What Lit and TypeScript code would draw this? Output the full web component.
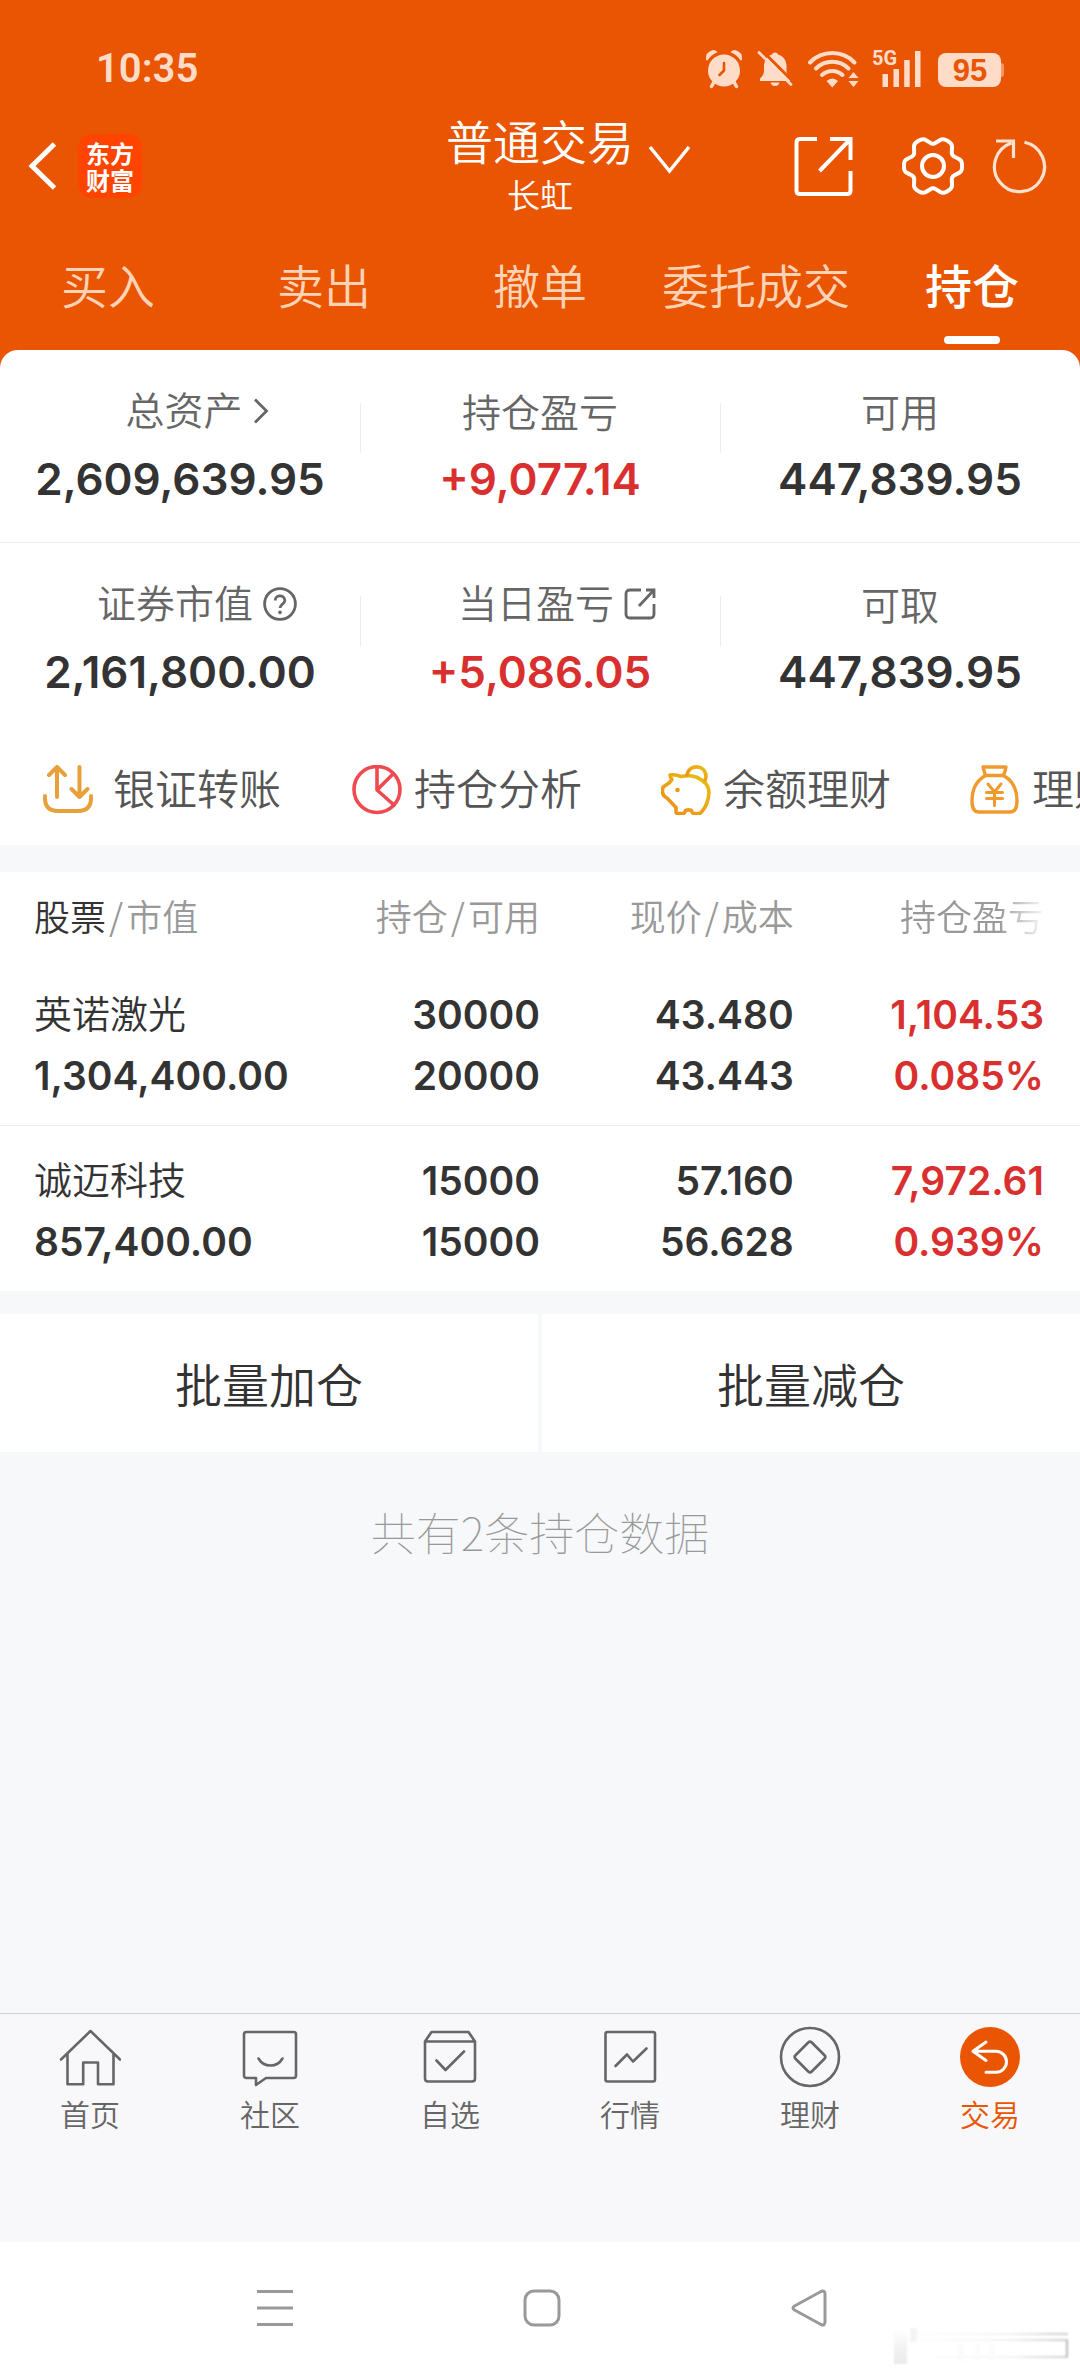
import { LitElement, html, css, svg, nothing } from "lit";
import { customElement, state } from "lit/decorators.js";
import { classMap } from "lit/directives/class-map.js";

interface Stat {
  label: string;
  value: string;
  rise?: boolean;
  icon?: unknown;
}

interface Holding {
  name: string;
  marketValue: string;
  held: string;
  available: string;
  price: string;
  cost: string;
  profit: string;
  rate: string;
}

/** Outline of a six-lobed gear, built from smoothed polar points. */
function gearPath(cx: number, cy: number): string {
  const profile: [number, number][] = [
    [-10, 29.5],
    [10, 29.5],
    [18, 25.5],
    [30, 21.5],
    [42, 25.5],
  ];
  const points: [number, number][] = [];
  for (let lobe = 0; lobe < 6; lobe++) {
    for (const [angle, r] of profile) {
      const a = ((lobe * 60 + angle) * Math.PI) / 180;
      points.push([cx + r * Math.cos(a), cy + r * Math.sin(a)]);
    }
  }
  const mid = (i: number) => {
    const p = points[i % points.length];
    const q = points[(i + 1) % points.length];
    return `${((p[0] + q[0]) / 2).toFixed(1)} ${((p[1] + q[1]) / 2).toFixed(1)}`;
  };
  let d = `M${mid(points.length - 1)}`;
  points.forEach((p, i) => {
    d += `Q${p[0].toFixed(1)} ${p[1].toFixed(1)} ${mid(i)}`;
  });
  return d + "Z";
}

const chevronRight = html`<svg class="mini" width="16" height="28" viewBox="0 0 16 28" aria-hidden="true">
  <path d="M2 2.500 13.500 14 2 25.500" />
</svg>`;

const question = html`<svg class="mini" width="34" height="34" viewBox="0 0 34 34" aria-hidden="true">
  <circle cx="17" cy="17" r="15.4" />
  <path d="M12.2 13.4c0-6 9.6-6 9.6 0 0 3.800-4.800 3.600-4.800 7.600" />
  <circle class="dot" cx="17" cy="25.4" r="1.8" />
</svg>`;

const openSmall = html`<svg class="mini" width="32" height="32" viewBox="0 0 32 32" aria-hidden="true">
  <path d="M17 2H6Q2 2 2 6v20q0 4 4 4h20q4 0 4-4V16M22 2h8v8M15 18 30 2" />
</svg>`;

const STATS: Stat[][] = [
  [
    { label: "总资产", value: "2,609,639.95", icon: chevronRight },
    { label: "持仓盈亏", value: "+9,077.14", rise: true },
    { label: "可用", value: "447,839.95" },
  ],
  [
    { label: "证券市值", value: "2,161,800.00", icon: question },
    { label: "当日盈亏", value: "+5,086.05", rise: true, icon: openSmall },
    { label: "可取", value: "447,839.95" },
  ],
];

const HOLDINGS: Holding[] = [
  {
    name: "英诺激光",
    marketValue: "1,304,400.00",
    held: "30000",
    available: "20000",
    price: "43.480",
    cost: "43.443",
    profit: "1,104.53",
    rate: "0.085%",
  },
  {
    name: "诚迈科技",
    marketValue: "857,400.00",
    held: "15000",
    available: "15000",
    price: "57.160",
    cost: "56.628",
    profit: "7,972.61",
    rate: "0.939%",
  },
];

const SHORTCUTS = [
  {
    label: "银证转账",
    wide: true,
    icon: svg`<g stroke="#e8a03a" stroke-width="4">
      <path d="M14 32V2M6 10l8-8 8 8M36.500 2v30M28.500 24l8 8 8-8" />
      <path d="M2 31v2q0 13 13 13h20q13 0 13-13v-2" /></g>`,
  },
  {
    label: "持仓分析",
    icon: svg`<g stroke="#ee4a50" stroke-width="3.6">
      <circle cx="25" cy="24.500" r="23" /><path d="M25 2v23L41 9M25 25l17 15" /></g>`,
  },
  {
    label: "余额理财",
    icon: svg`<defs><linearGradient id="pig" x1="0" y1="1" x2="1" y2="0">
        <stop offset="0" stop-color="#ee8a1c" /><stop offset="1" stop-color="#e8c010" /></linearGradient></defs>
      <g stroke="url(#pig)" stroke-width="3.6">
      <path d="M9 10q5-1 11 1.500 8-1.800 15 .5 13 5 13 16-1 12-7.500 19-1 1.500-3 1.500h-4.500q-2 0-2.500-3-3-1.200-6 0-.5 3-2.500 3H17q-2 0-2-2v-4L6 33q-4-2-4.300-5-.7-4 .5-6l5.800-4 3-3.500Q9 12 9 10Z" />
      <path d="M26 10C28-1.500 44-.5 45 11q0 2-.8 4" /></g>
      <circle cx="16.500" cy="25" r="2.300" fill="#ea9a1a" />`,
  },
  {
    label: "理财产品",
    icon: svg`<g stroke="#f09a2e" stroke-width="3.400">
      <path d="M13 2h23q-1 5-2.500 8.500h-18Q14 6 13 2Z" />
      <path d="M15.500 10.500Q2 18 2 36q0 11 7 11h31q7 0 7-11 0-18-13.500-25.500" />
      <path stroke-width="3" d="m18 19 6.500 8 6.500-8M16.500 27.500h16M16.500 33.500h16M24.500 27v13.500" /></g>`,
  },
];

const BOTTOM_TABS = [
  {
    label: "首页",
    icon: svg`<path d="M1 33.500 30.500 5 60 33.500M7.500 28v30.300h15.700V36.500H38v21.800h15.500V28" />`,
  },
  {
    label: "社区",
    icon: svg`<path d="M6.500 6h47q2.500 0 2.500 2.500v41q0 2.500-2.500 2.500H26l-10 7v-7H6.500Q4 52 4 49.500v-41Q4 6 6.500 6Z" />
      <path d="M18.500 32.500q4 7 12 7t12-7" />`,
  },
  {
    label: "自选",
    icon: svg`<path d="M5 15.500 11.500 6h37L55 15.500v37q0 3-3 3H8q-3 0-3-3ZM5 15.500h50M16.500 34.500l9 9.500L44 25.500" />`,
  },
  {
    label: "行情",
    icon: svg`<rect x="5.500" y="6" width="49.500" height="49.500" rx="2" />
      <path d="m15.500 40 11.500-11.500 6 7L46.500 22.500" />`,
  },
  {
    label: "理财",
    icon: svg`<circle cx="30" cy="31" r="29" /><rect x="18.500" y="19.500" width="23" height="23" rx="2.500" transform="rotate(45 30 31)" />`,
  },
  {
    label: "交易",
    icon: svg`<circle class="disc" cx="30" cy="31" r="30" />
      <path class="mark" d="M26 16 13 25.300 26 34.500M13.500 25.300H36a10.500 10.500 0 0 1 0 21H26" />`,
  },
];

@customElement("status-bar")
class StatusBar extends LitElement {
  static styles = css`
    :host {
      display: flex;
      justify-content: space-between;
      align-items: center;
      height: 82px;
      padding: 28px 76px 0 96px;
      color: #ffdcc8;
      font-family: Roboto, "Noto Sans", sans-serif;
    }
    .time {
      font-size: 40px;
      font-weight: 600;
      line-height: 48px;
    }
    .icons {
      display: flex;
      align-items: center;
      gap: 14px;
    }
    svg {
      display: block;
      overflow: visible;
      fill: currentColor;
    }
    .hole {
      stroke: #e95503;
      fill: none;
    }
    .line {
      stroke: currentColor;
      fill: none;
      stroke-linecap: round;
    }
    .network {
      font: 700 20px Roboto, sans-serif;
    }
    .battery {
      font: 700 31px "Liberation Sans", sans-serif;
      fill: #e95503;
      text-anchor: middle;
    }
  `;

  render() {
    return html`
      <span class="time">10:35</span>
      <div class="icons">
        <svg width="38" height="38" viewBox="0 0 38 38" role="img" aria-label="闹钟">
          <circle cx="19" cy="20.5" r="16" />
          <path d="M1 10Q0 2 8 0q3 0 4.500 2.200Q5.500 5 2.500 10.500ZM37 10q1-8-7-10-3 0-4.500 2.200Q32.500 5 35.500 10.500Z" />
          <path class="line" stroke-width="3.5" d="m9 32-2.500 4.500M29 32l2.500 4.500" />
          <path class="hole" stroke-width="2.6" stroke-linecap="round" stroke-linejoin="round" d="M19 13v7.500L14.500 25" />
        </svg>
        <svg width="36" height="38" viewBox="0 0 36 38" role="img" aria-label="静音">
          <path d="M18 2.500q2.500 0 3 2Q29 7 29.500 15v6q0 4 3.500 7.500V31H3v-2.500Q7 25 7 21v-6Q7.500 7 15 4.500q.5-2 3-2ZM13.500 32.500h9q-1 3.500-4.500 3.500t-4.500-3.500Z" />
          <path class="hole" stroke-width="3" d="M4.500 0 37 32.500" />
          <path class="line" stroke-width="2.8" d="m2 2.500 32 32" />
        </svg>
        <svg width="52" height="38" viewBox="0 0 52 38" role="img" aria-label="无线网络">
          <g class="line" stroke-width="4">
            <path d="M3 12.500a31 31 0 0 1 44.500 0M9 18.500a23 23 0 0 1 32.500 0M15 25a15 15 0 0 1 20.500 0" />
          </g>
          <path d="M19.500 31q5.800-5 11.600 0l-5.800 6.500ZM46.500 22l5 6h-10ZM46.500 37l5-6h-10Z" />
        </svg>
        <svg width="48" height="38" viewBox="0 0 48 38" role="img" aria-label="信号">
          <text class="network" x="-1" y="15">5G</text>
          <path d="M9.500 24h5.500v13H9.500ZM20.500 19H26v18h-5.500ZM31.200 10h5.500v27h-5.500ZM42 1h5.500v36H42Z" />
        </svg>
        <svg width="69" height="38" viewBox="0 0 69 38" role="img" aria-label="电量 95">
          <rect x="3" y="3" width="63" height="34" rx="8" />
          <path opacity=".5" d="M66 13q3 0 3 3v8q0 3-3 3Z" />
          <text class="battery" x="35" y="31">95</text>
        </svg>
      </div>
    `;
  }
}

@customElement("trade-header")
class TradeHeader extends LitElement {
  @state() private active = 4;

  static styles = css`
    :host {
      display: block;
      color: #fff;
      font-family: "Noto Sans CJK SC", sans-serif;
    }
    button,
    a {
      all: unset;
      cursor: pointer;
      display: block;
    }
    svg {
      display: block;
      fill: none;
      stroke: currentColor;
      stroke-width: 4;
    }
    .bar {
      display: grid;
      grid-template-columns: 1fr auto 1fr;
      align-items: center;
      height: 112px;
    }
    .left {
      display: flex;
      align-items: center;
      gap: 20px;
      padding-left: 28px;
    }
    .logo {
      display: grid;
      place-content: center;
      width: 64px;
      height: 64px;
      border-radius: 14px;
      background: #ff4400;
      font-size: 24px;
      font-weight: 700;
      line-height: 27px;
      text-align: center;
    }
    .title {
      text-align: center;
    }
    .name {
      margin: 0;
      font-size: 47px;
      font-weight: 350;
      line-height: 56px;
    }
    .account {
      margin: 0;
      font-size: 33px;
      font-weight: 350;
      line-height: 52px;
    }
    .right {
      display: flex;
      align-items: center;
      padding: 0 32px 0 14px;
    }
    .down {
      margin-right: auto;
      padding-bottom: 12px;
    }
    .settings {
      margin: 0 28px 0 48px;
    }
    .soft {
      color: #ffe2cf;
    }
    .tabs {
      display: grid;
      grid-template-columns: repeat(5, 1fr);
      height: 128px;
    }
    .tab {
      display: flex;
      flex-direction: column;
      align-items: center;
      padding-top: 30px;
      gap: 20px;
      font-size: 47px;
      font-weight: 350;
      line-height: 64px;
      color: #ffd3b5;
    }
    .tab.on {
      color: #fff;
      font-weight: 500;
    }
    .tab.on::after {
      content: "";
      width: 56px;
      height: 8px;
      border-radius: 4px;
      background: #fff;
    }
  `;

  render() {
    const tabs = ["买入", "卖出", "撤单", "委托成交", "持仓"];
    return html`
      <div class="bar">
        <div class="left">
          <button aria-label="返回">
            <svg width="30" height="50" viewBox="0 0 30 50"><path stroke-width="5" d="M26.500 3 4 25l22.500 22" /></svg>
          </button>
          <a class="logo" href="#home"><span>东方</span><span>财富</span></a>
        </div>
        <div class="title">
          <h1 class="name">普通交易</h1>
          <p class="account">长虹</p>
        </div>
        <div class="right">
          <button class="down" aria-label="切换账户">
            <svg width="43" height="30" viewBox="0 0 43 30"><path stroke-width="3.5" d="m2 2 19.500 24L41 2" /></svg>
          </button>
          <button aria-label="分享">
            <svg width="60" height="60" viewBox="0 0 60 60">
              <path d="M23 3H6Q2.500 3 2.500 6.500v48Q2.500 58 6 58h47q3.500 0 3.500-3.500V35M36 3h20.500v21M25.500 35l31-32" />
            </svg>
          </button>
          <button class="settings" aria-label="设置">
            <svg width="62" height="62" viewBox="0 0 62 62">
              <path d=${gearPath(31, 31)} /><circle cx="31" cy="31" r="11" />
            </svg>
          </button>
          <button class="soft" aria-label="刷新">
            <svg width="56" height="56" viewBox="0 0 56 56">
              <path stroke-width="3.2" d="M32.500 4.200A25 25 0 1 1 19.500 5M4 3h17.500v17" />
            </svg>
          </button>
        </div>
      </div>
      <nav class="tabs">
        ${tabs.map(
          (label, i) => html`<button
            class=${classMap({ tab: true, on: i === this.active })}
            @click=${() => (this.active = i)}
          >
            ${label}
          </button>`,
        )}
      </nav>
    `;
  }
}

@customElement("asset-summary")
class AssetSummary extends LitElement {
  static styles = css`
    :host {
      display: block;
      background: #fff;
      border-radius: 18px 18px 0 0;
      font-family: Inter, "Noto Sans CJK SC", sans-serif;
    }
    .row {
      display: grid;
      grid-template-columns: repeat(3, 1fr);
      height: 193px;
      border-bottom: 1px solid #ebebeb;
      box-sizing: border-box;
    }
    .row:last-of-type {
      height: 192px;
      border-bottom: 0;
    }
    .stat {
      display: flex;
      flex-direction: column;
      align-items: center;
      padding-top: 35px;
      background: linear-gradient(#ededed, #ededed) no-repeat left 53px / 1px 50px;
    }
    .stat:first-child {
      background: none;
    }
    .label {
      display: flex;
      align-items: center;
      gap: 10px;
      height: 56px;
      color: #666;
      font-size: 39px;
      font-weight: 350;
      line-height: 56px;
    }
    .label.with-icon {
      height: 52px;
      padding: 0 0 4px 34px;
    }
    .value {
      color: #333;
      font-size: 44px;
      font-weight: 600;
      line-height: 76px;
    }
    .rise {
      color: #d9302f;
    }
    .mini {
      fill: none;
      stroke: #666;
      stroke-width: 2.8;
    }
    .mini .dot {
      fill: #666;
      stroke: none;
    }
    .shortcuts {
      display: flex;
      overflow: hidden;
      height: 110px;
      padding-left: 43px;
    }
    .shortcut {
      all: unset;
      cursor: pointer;
      display: flex;
      flex: 0 0 309px;
      align-items: center;
      gap: 12px;
      color: #555;
      font-size: 42px;
      font-weight: 350;
      line-height: 60px;
      white-space: nowrap;
    }
    .shortcut.wide {
      gap: 20px;
    }
    .glyph {
      flex: none;
      fill: none;
      stroke-linecap: round;
      stroke-linejoin: round;
    }
  `;

  render() {
    return html`
      ${STATS.map(
        (row) => html`<div class="row">
          ${row.map(
            (s) => html`<div class="stat">
              <span class=${classMap({ label: true, "with-icon": !!s.icon })}>${s.label}${s.icon ?? nothing}</span>
              <span class=${classMap({ value: true, rise: !!s.rise })}>${s.value}</span>
            </div>`,
          )}
        </div>`,
      )}
      <nav class="shortcuts">
        ${SHORTCUTS.map(
          (s) => html`<button class=${classMap({ shortcut: true, wide: !!s.wide })}>
            <svg class="glyph" width="50" height="50" viewBox="0 0 50 50" aria-hidden="true">${s.icon}</svg>
            ${s.label}
          </button>`,
        )}
      </nav>
    `;
  }
}

@customElement("holdings-table")
class HoldingsTable extends LitElement {
  static styles = css`
    :host {
      display: block;
      background: #fff;
      font-family: Inter, "Noto Sans CJK SC", sans-serif;
    }
    table {
      width: 100%;
      table-layout: fixed;
      border-collapse: collapse;
      text-align: right;
    }
    .c1 {
      width: 30%;
    }
    .c2 {
      width: 20%;
    }
    .c3 {
      width: 23.5%;
    }
    th {
      height: 88px;
      padding: 0;
      color: #999;
      font-family: "Noto Sans CJK SC", sans-serif;
      font-size: 36px;
      font-weight: 350;
      line-height: 86px;
      vertical-align: top;
      white-space: nowrap;
    }
    th:first-child,
    td:first-child {
      padding-left: 34px;
      text-align: left;
    }
    th:last-child,
    td:last-child {
      padding-right: 36px;
    }
    .lead {
      color: #333;
    }
    .slash {
      margin: 0 3px;
    }
    .fade {
      -webkit-mask-image: linear-gradient(90deg, #000 68%, transparent 102%);
      mask-image: linear-gradient(90deg, #000 68%, transparent 102%);
    }
    td {
      padding: 24px 0 19px;
      border-bottom: 1px solid #ebebeb;
      color: #333;
      font-size: 39px;
      font-weight: 600;
      line-height: 61px;
      white-space: nowrap;
    }
    tr:last-child td {
      border-bottom: 0;
    }
    .line {
      display: block;
      height: 61px;
    }
    .stock {
      font-size: 38px;
      font-weight: 350;
    }
    .rise {
      color: #d9302f;
    }
  `;

  render() {
    const slash = html`<span class="slash">/</span>`;
    return html`<table>
      <colgroup>
        <col class="c1" />
        <col class="c2" />
        <col class="c3" />
        <col />
      </colgroup>
      <thead>
        <tr>
          <th scope="col"><span class="lead">股票</span>${slash}市值</th>
          <th scope="col">持仓${slash}可用</th>
          <th scope="col">现价${slash}成本</th>
          <th scope="col"><span class="fade">持仓盈亏</span></th>
        </tr>
      </thead>
      <tbody>
        ${HOLDINGS.map(
          (h) => html`<tr>
            <td><span class="line stock">${h.name}</span><span class="line">${h.marketValue}</span></td>
            <td><span class="line">${h.held}</span><span class="line">${h.available}</span></td>
            <td><span class="line">${h.price}</span><span class="line">${h.cost}</span></td>
            <td class="rise"><span class="line">${h.profit}</span><span class="line">${h.rate}</span></td>
          </tr>`,
        )}
      </tbody>
    </table>`;
  }
}

@customElement("bottom-tabs")
class BottomTabs extends LitElement {
  static styles = css`
    :host {
      display: grid;
      grid-template-columns: repeat(6, 1fr);
      align-items: start;
      height: 216px;
      padding-top: 12px;
      border-top: 1px solid #cfd0d3;
      background: #f8f8fa;
      font-family: "Noto Sans CJK SC", sans-serif;
    }
    .item {
      display: flex;
      flex-direction: column;
      align-items: center;
      gap: 5px;
      color: #666;
      font-size: 30px;
      font-weight: 350;
      line-height: 40px;
      text-decoration: none;
    }
    .item.on {
      color: #e95503;
    }
    svg {
      display: block;
      fill: none;
      stroke: currentColor;
      stroke-width: 2.6;
      stroke-linejoin: round;
      stroke-linecap: round;
    }
    .disc {
      fill: currentColor;
      stroke: none;
    }
    .mark {
      stroke: #fff;
      stroke-width: 3;
    }
  `;

  render() {
    return BOTTOM_TABS.map(
      (t, i) => html`<a href="#tab-${i}" class=${classMap({ item: true, on: i === 5 })}>
        <svg width="62" height="62" viewBox="-1 0 62 62" aria-hidden="true">${t.icon}</svg>
        ${t.label}
      </a>`,
    );
  }
}

@customElement("system-nav")
class SystemNav extends LitElement {
  static styles = css`
    :host {
      position: relative;
      display: grid;
      grid-template-columns: repeat(3, 1fr);
      place-items: center;
      height: 132px;
      padding: 0 138px 0 142px;
      background: #fff;
    }
    button {
      all: unset;
      cursor: pointer;
    }
    svg {
      display: block;
      fill: none;
      stroke: #999;
      stroke-width: 3;
      stroke-linejoin: round;
    }
    .smudge {
      position: absolute;
      right: 8px;
      bottom: 6px;
    }
    .smudge * {
      stroke: none;
    }
  `;

  render() {
    return html`
      <button aria-label="最近任务">
        <svg width="38" height="38" viewBox="0 0 38 38"><path d="M1 2.500h36M1 19h36M1 35.500h36" /></svg>
      </button>
      <button aria-label="主屏幕">
        <svg width="38" height="38" viewBox="0 0 38 38"><rect x="2" y="2" width="34" height="34" rx="9" /></svg>
      </button>
      <button aria-label="返回">
        <svg width="38" height="38" viewBox="0 0 38 38">
          <path d="M4.500 17 31 2.500q4-1.500 4 2.500v28q0 4-4 2.500L4.500 21q-3-2 0-4Z" />
        </svg>
      </button>
      <svg class="smudge" width="180" height="42" viewBox="0 0 180 42" aria-hidden="true">
        <defs>
          <linearGradient id="v" x1="0" y1="0" x2="0" y2="1">
            <stop offset="0" stop-color="#fefefe" />
            <stop offset="1" stop-color="#e9e9e9" />
          </linearGradient>
          <linearGradient id="h">
            <stop offset="0" stop-color="#fdfdfd" />
            <stop offset="0.6" stop-color="#f2f2f2" />
            <stop offset="1" stop-color="#cccccc" />
          </linearGradient>
          <filter id="b" x="-20%" y="-20%" width="140%" height="140%"><feGaussianBlur stdDeviation="1" /></filter>
        </defs>
        <g filter="url(#b)">
          <rect x="2" y="4" width="13" height="34" fill="url(#v)" />
          <rect x="18" y="2" width="7" height="14" fill="#f4f4f4" />
          <rect x="28" y="7" width="148" height="2" fill="url(#h)" />
          <rect x="28" y="13" width="148" height="2" fill="url(#h)" />
          <rect x="40" y="30" width="136" height="2" fill="url(#h)" />
          <rect x="174" y="14" width="2" height="17" fill="#b8b8b8" />
          <path fill="#fafafa" d="M66 18h6v17h-6ZM84 18h4v17h-4ZM98 18h4v17h-4Z" />
        </g>
      </svg>
    `;
  }
}

@customElement("app-root")
class AppRoot extends LitElement {
  static styles = css`
    :host {
      display: flex;
      flex-direction: column;
      min-height: 100vh;
      background: #f7f8fa;
      font-family: "Noto Sans CJK SC", sans-serif;
    }
    .top {
      background: #e95503;
    }
    .holdings {
      margin-top: 27px;
    }
    .actions {
      display: grid;
      grid-template-columns: 1fr 1fr;
      gap: 4px;
      margin-top: 23px;
    }
    .action {
      all: unset;
      cursor: pointer;
      background: #fff;
      color: #333;
      font-size: 47px;
      font-weight: 350;
      line-height: 138px;
      text-align: center;
    }
    .hint {
      flex: 1;
      margin: 0;
      padding-top: 48px;
      color: #999;
      font-size: 45px;
      font-weight: 100;
      line-height: 64px;
      text-align: center;
    }
  `;

  render() {
    return html`
      <div class="top">
        <status-bar></status-bar>
        <trade-header></trade-header>
        <asset-summary></asset-summary>
      </div>
      <holdings-table class="holdings"></holdings-table>
      <div class="actions">
        <button class="action">批量加仓</button>
        <button class="action">批量减仓</button>
      </div>
      <p class="hint">共有2条持仓数据</p>
      <bottom-tabs></bottom-tabs>
      <system-nav></system-nav>
    `;
  }
}
